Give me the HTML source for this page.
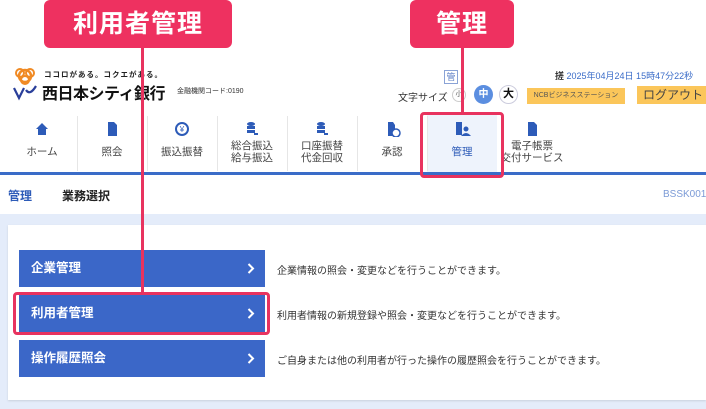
<!DOCTYPE html>
<html><head><meta charset="utf-8"><style>
*{margin:0;padding:0;box-sizing:border-box}
body{width:706px;height:409px;overflow:hidden;background:#fff;font-family:"Liberation Sans","Noto Sans CJK JP",sans-serif;position:relative;color:#333}
.a{position:absolute}
.call{background:#ee3160;color:#fff;font-weight:bold;font-size:25px;border-radius:6px;text-align:center;line-height:48px;letter-spacing:1px}
.nav{top:115px;height:57px;width:70px;text-align:center;font-size:10.5px;color:#444}
.nav .ic{position:absolute;top:6px;left:0;width:100%;height:16px}
.nav .t{position:absolute;top:30px;left:0;width:100%;line-height:12px}
.div{top:116px;width:1px;height:55px;background:#e6e6e6}
.btn{left:19px;width:246px;height:37px;background:#3b67c8;color:#fff;font-size:12.5px;line-height:37px;padding-left:12px;font-weight:bold}
.btn svg{position:absolute;right:10px;top:13px}
.d{left:277px;font-size:10px;color:#333}
</style></head><body>
<svg class="a" style="left:12px;top:66px" width="26" height="36" viewBox="0 0 26 36">
<circle cx="13" cy="10" r="6" fill="none" stroke="#f08a24" stroke-width="2.5"/><circle cx="8" cy="7" r="4" fill="none" stroke="#f08a24" stroke-width="2"/><circle cx="18" cy="7" r="4" fill="none" stroke="#f08a24" stroke-width="2"/><circle cx="13" cy="14" r="4" fill="none" stroke="#f08a24" stroke-width="2"/>
<path d="M2 22 L7 32 L12 22 M14 24 Q18 30 24 20" fill="none" stroke="#2a3f9a" stroke-width="2.2"/></svg>
<div class="a" style="left:44px;top:69px;font-size:7.5px;font-weight:bold;letter-spacing:1px;color:#222">ココロがある。コクエがある。</div>
<div class="a" style="left:42px;top:80px;font-size:16px;font-weight:bold;color:#111;letter-spacing:-0.5px">西日本シティ銀行</div>
<div class="a" style="left:177px;top:86px;font-size:7px;color:#333">金融機関コード:0190</div>

<div class="a" style="left:444px;top:70px;width:14px;height:14px;border:1px solid #8aa3d6;color:#5a7cc4;font-size:9px;line-height:12px;text-align:center">管</div>
<div class="a" style="left:555px;top:69px;font-size:9px;color:#3a6cc8;white-space:nowrap"><b style="color:#333">搓</b> 2025年04月24日 15時47分22秒</div>
<div class="a" style="left:398px;top:89px;font-size:10px;color:#333">文字サイズ</div>
<div class="a" style="left:452px;top:88px;width:14px;height:14px;border-radius:50%;border:1px solid #ccc;font-size:7px;text-align:center;line-height:12px;color:#555">小</div>
<div class="a" style="left:474px;top:85px;width:19px;height:19px;border-radius:50%;background:#5b8ee0;color:#fff;font-size:10px;text-align:center;line-height:19px;font-weight:bold">中</div>
<div class="a" style="left:499px;top:85px;width:19px;height:19px;border-radius:50%;border:1px solid #ccd;color:#111;font-size:11px;text-align:center;line-height:17px;font-weight:bold">大</div>
<div class="a" style="left:527px;top:88px;width:98px;height:16px;background:#fbc65a;color:#555;font-size:7px;text-align:center;line-height:16px">NCBビジネスステーション</div>
<div class="a" style="left:637px;top:86px;width:72px;height:18px;background:#fbc65a;color:#444;font-size:12px;text-align:center;line-height:18px">ログアウト</div>

<div class="a" style="left:427px;top:114px;width:70px;height:58px;background:#eef3fc"></div>
<div class="a nav" style="left:7px"><svg class="ic" viewBox="0 0 70 16"><path d="M29 8 L35 2 L41 8 L39 8 L39 14 L31 14 L31 8Z" fill="#2d5bb8"/></svg><div class="t" style="top:31px">ホーム</div></div>
<div class="a nav" style="left:77px"><svg class="ic" viewBox="0 0 70 16"><path d="M31 1 H37 L40 4 V15 H31Z" fill="#2d5bb8"/></svg><div class="t" style="top:31px">照会</div></div>
<div class="a nav" style="left:147px"><svg class="ic" viewBox="0 0 70 16"><circle cx="35" cy="8" r="6" fill="none" stroke="#2d5bb8" stroke-width="2"/><text x="35" y="11" font-size="8" text-anchor="middle" fill="#2d5bb8">¥</text></svg><div class="t" style="top:31px">振込振替</div></div>
<div class="a nav" style="left:217px"><svg class="ic" viewBox="0 0 70 16"><ellipse cx="34" cy="3" rx="4" ry="2" fill="#2d5bb8"/><rect x="30" y="5" width="8" height="3" fill="#2d5bb8"/><rect x="30" y="9" width="8" height="3" fill="#2d5bb8"/><path d="M37 13 H41" stroke="#2d5bb8" stroke-width="2"/></svg><div class="t" style="top:25px">総合振込<br>給与振込</div></div>
<div class="a nav" style="left:287px"><svg class="ic" viewBox="0 0 70 16"><ellipse cx="34" cy="3" rx="4" ry="2" fill="#2d5bb8"/><rect x="30" y="5" width="8" height="3" fill="#2d5bb8"/><rect x="30" y="9" width="8" height="3" fill="#2d5bb8"/><path d="M37 13 H41" stroke="#2d5bb8" stroke-width="2"/></svg><div class="t" style="top:25px">口座振替<br>代金回収</div></div>
<div class="a nav" style="left:357px"><svg class="ic" viewBox="0 0 70 16"><path d="M31 1 H36 L38 4 V15 H31Z" fill="#2d5bb8"/><circle cx="39" cy="12" r="4" fill="#fff" stroke="#2d5bb8" stroke-width="1.5"/></svg><div class="t" style="top:31px">承認</div></div>
<div class="a nav" style="left:427px"><svg class="ic" viewBox="0 0 70 16"><rect x="29" y="1" width="6" height="13" fill="#2d5bb8"/><circle cx="39" cy="8" r="2.5" fill="#2d5bb8"/><path d="M34 15 Q39 9 44 15Z" fill="#2d5bb8"/></svg><div class="t" style="top:31px;color:#2d5bb8">管理</div></div>
<div class="a nav" style="left:497px"><svg class="ic" viewBox="0 0 70 16"><path d="M31 1 H37 L40 4 V15 H31Z" fill="#2d5bb8"/></svg><div class="t" style="top:25px">電子帳票<br>交付サービス</div></div>
<div class="a div" style="left:77px"></div><div class="a div" style="left:147px"></div><div class="a div" style="left:217px"></div><div class="a div" style="left:287px"></div><div class="a div" style="left:357px"></div><div class="a div" style="left:427px"></div>
<div class="a" style="left:0;top:172px;width:706px;height:3px;background:#3a6cc8"></div>

<div class="a" style="left:8px;top:187px;font-size:12px;font-weight:bold;color:#2d5bb8">管理</div>
<div class="a" style="left:62px;top:187px;font-size:12px;font-weight:bold;color:#222">業務選択</div>
<div class="a" style="left:663px;top:189px;font-size:10px;color:#7b9ad6">BSSK001</div>

<div class="a" style="left:0;top:214px;width:706px;height:195px;background:#e4ecfa"></div>
<div class="a" style="left:8px;top:225px;width:698px;height:175px;background:#fff;box-shadow:0 1px 2px #c8d0dc"></div>
<div class="a btn" style="top:250px">企業管理<svg width="8" height="11" viewBox="0 0 8 11"><path d="M1.5 1 L6 5.5 L1.5 10" fill="none" stroke="#fff" stroke-width="2"/></svg></div>
<div class="a btn" style="top:295px">利用者管理<svg width="8" height="11" viewBox="0 0 8 11"><path d="M1.5 1 L6 5.5 L1.5 10" fill="none" stroke="#fff" stroke-width="2"/></svg></div>
<div class="a btn" style="top:340px">操作履歴照会<svg width="8" height="11" viewBox="0 0 8 11"><path d="M1.5 1 L6 5.5 L1.5 10" fill="none" stroke="#fff" stroke-width="2"/></svg></div>
<div class="a d" style="top:262px">企業情報の照会・変更などを行うことができます。</div>
<div class="a d" style="top:307px">利用者情報の新規登録や照会・変更などを行うことができます。</div>
<div class="a d" style="top:352px">ご自身または他の利用者が行った操作の履歴照会を行うことができます。</div>

<div class="a" style="left:141px;top:46px;width:3px;height:246px;background:#e8335f"></div>
<div class="a" style="left:461px;top:46px;width:3px;height:66px;background:#e8335f"></div>
<div class="a call" style="left:44px;top:0;width:188px;height:48px">利用者管理</div>
<div class="a call" style="left:410px;top:0;width:104px;height:48px">管理</div>
<div class="a" style="left:420px;top:112px;width:84px;height:66px;border:3px solid #e8335f;border-radius:4px"></div>
<div class="a" style="left:13px;top:292px;width:257px;height:43px;border:3px solid #e8335f;border-radius:4px"></div>
</body></html>
